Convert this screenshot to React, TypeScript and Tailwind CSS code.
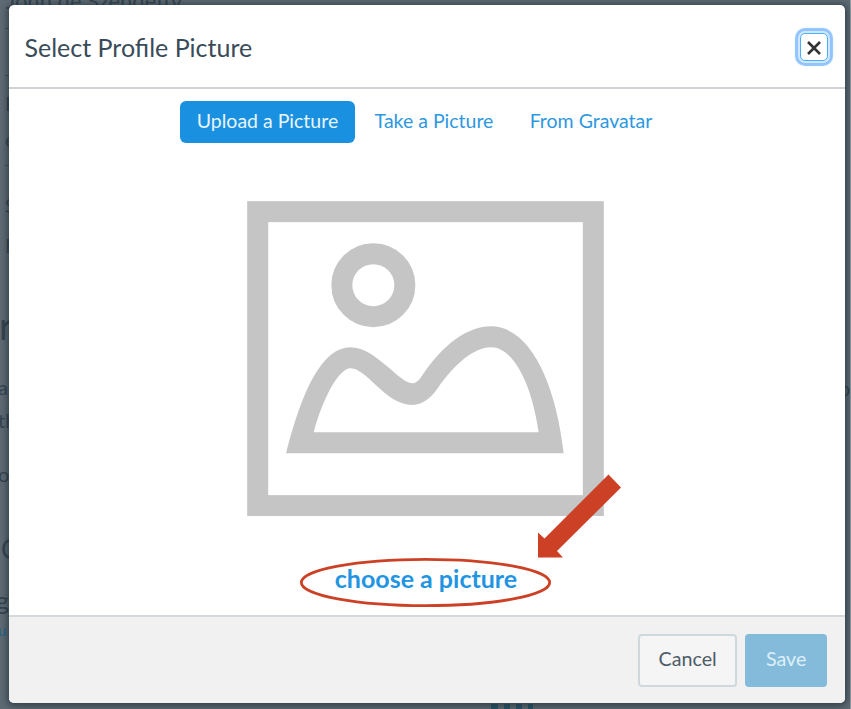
function PageBehind() {
  return (
    <div
      aria-hidden="true"
      className="col-start-1 row-start-1 flex h-[709px] min-w-0 justify-between overflow-hidden border-r border-[#929ba1] bg-[#5f6b74] text-[20px] text-[#35444f]"
    >
      <div className="flex w-[560px] flex-col whitespace-nowrap">
        <div className="ml-[5px] flex h-[29px] items-start border-b border-[#414f5a] pl-px text-[22px] leading-none">
          <span className="-mt-[10px]">John de Szendeffy</span>
        </div>
        <div className="ml-[5px] h-[47px] border-b border-[#414f5a]" />
        <div className="ml-[5px] flex h-[90px] flex-col border-b border-[#414f5a] pt-[9px] leading-[36px]">
          <span>P</span>
          <span>e</span>
        </div>
        <div className="ml-[5px] flex h-[103px] flex-col pt-[19px] leading-[40px]">
          <span>S</span>
          <span>P</span>
        </div>
        <span className="-ml-px h-[102px] pt-[36px] text-[38px] leading-[40px]">r</span>
        <span className="-ml-[2px] h-[33px] leading-[33px]">a</span>
        <span className="-ml-[2px] h-[54px] leading-[33px]">th</span>
        <span className="-ml-[2px] h-[67px] leading-[33px]">o</span>
        <span className="ml-px h-[53px] text-[26px] leading-[49px]">C</span>
        <span className="-ml-[4px] h-[42px] text-[25px] leading-[44px]">g</span>
        <span className="-ml-[2px] h-[84px] text-[15px] leading-[20px] text-[#23658c]">u</span>
        <div className="ml-[491px] flex h-[5px] gap-[6px]">
          <i className="w-[7px] bg-[#285468]" />
          <i className="w-[6px] bg-[#285468]" />
          <i className="w-[6px] bg-[#285468]" />
          <i className="w-[5px] bg-[#285468]" />
        </div>
      </div>
      <span className="mt-[368px] h-[40px] w-[11px] leading-[40px]">o</span>
    </div>
  );
}

function PicturePlaceholder() {
  return (
    <svg viewBox="22 31 1071 946" className="h-[315.3px] w-[357px]" fill="none" stroke="#c5c5c5">
      <rect x="54" y="63" width="1007" height="882" strokeWidth="63" />
      <circle cx="401" cy="283.5" r="94.5" strokeWidth="63" />
      <path
        fill="#c5c5c5"
        stroke="none"
        fillRule="evenodd"
        d="M139 788C188 596 248 470 333 470C407 470 479 578 518 578C528 578 538 569 547 555C613 458 686 407 754 407C869 407 948 573 972 788ZM222 725H897C875 573 819 470 754 470C703 470 645 521 596 590C574 624 547 643 518 643C437 643 382 533 333 533C297 533 250 622 222 725Z"
      />
    </svg>
  );
}

function Annotations() {
  return (
    <svg viewBox="0 0 851 709" className="pointer-events-none absolute inset-0 z-20 h-[709px] w-[851px]" aria-hidden="true">
      <ellipse cx="425.5" cy="582.5" rx="124.2" ry="23.2" fill="none" stroke="#cc4125" strokeWidth="2.8" />
      <path d="M608.5 474.5L621 487.5L557 551L563 557.5H538V532.5L544.5 538.5Z" fill="#cc4125" />
    </svg>
  );
}

export default function App() {
  return (
    <main className="relative grid h-[709px] w-[851px] grid-cols-[851px] grid-rows-[709px] overflow-hidden font-['Lato',sans-serif]">
      <PageBehind />
      <section
        role="dialog"
        aria-label="Select Profile Picture"
        className="z-10 col-start-1 row-start-1 ml-[8.5px] mt-[5px] flex h-[698px] w-[836px] flex-col overflow-hidden rounded-[5px] bg-white shadow-[0_1px_7px_2px_rgba(25,40,50,0.65)]"
      >
        <header className="flex h-[84px] shrink-0 items-center justify-between border-b-2 border-[#cfd2d7] pl-[16px] pr-[17px]">
          <h1 className="pt-px text-[25px] leading-8 text-[#394b58]">Select Profile Picture</h1>
          <button
            aria-label="Close"
            className="mt-[2px] flex size-[28px] items-center justify-center rounded-[5px] border border-[#45b1f9] bg-white shadow-[0_0_0_2px_#d2e7ff,0_0_1px_5px_#8fc4ff]"
          >
            <svg viewBox="0 0 14 14" className="ml-px mt-px size-[14px]" stroke="#333" strokeWidth="2.6">
              <path d="M1 1L13 13M13 1L1 13" />
            </svg>
          </button>
        </header>
        <div className="flex flex-1 flex-col items-center">
          <nav className="mt-[12px] flex h-[42px] w-[493px] text-[19.5px] leading-[39px] text-[#2d98e0]">
            <button className="w-[175px] shrink-0 rounded-[6px] bg-[#1a90e0] pb-[3px] text-[#e9f5fd]">Upload a Picture</button>
            <button className="w-[158px] shrink-0 pb-[3px]">Take a Picture</button>
            <button className="w-[156px] shrink-0 pb-[3px]">From Gravatar</button>
          </nav>
          <div className="mt-[57.6px] pr-[3px]">
            <PicturePlaceholder />
          </div>
          <button className="mt-[45px] pr-px text-[25px] font-bold leading-[34px] text-[#2294e2]">choose a picture</button>
        </div>
        <footer className="flex h-[88px] shrink-0 items-center justify-end gap-2 border-t-2 border-[#d3d9dd] bg-[#f1f1f1] pr-[17.4px] text-[19.7px]">
          <button className="h-[53px] w-[99px] rounded-[4px] border-2 border-[#cfd8dd] bg-[#f5f5f5] pb-[2px] text-[#4d5b66]">Cancel</button>
          <button className="h-[53px] w-[82px] rounded-[4px] bg-[#84bbda] pb-[2px] text-[#deeff8]">Save</button>
        </footer>
      </section>
      <Annotations />
    </main>
  );
}
